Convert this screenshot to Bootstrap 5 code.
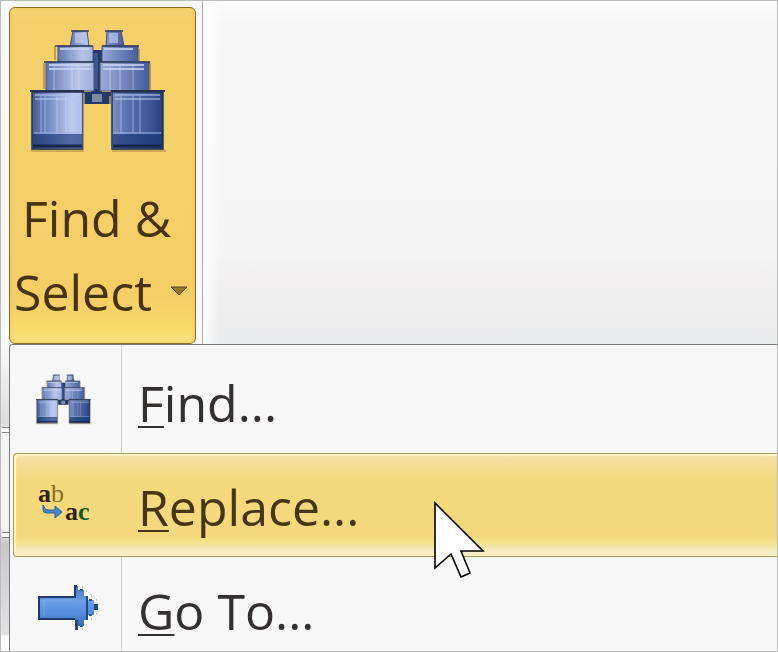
<!DOCTYPE html>
<html lang="en">
<head>
<meta charset="utf-8">
<meta name="viewport" content="width=device-width, initial-scale=1">
<title>Find &amp; Select</title>
<link href="https://cdn.jsdelivr.net/npm/bootstrap@5.3.0/dist/css/bootstrap.min.css" rel="stylesheet">
<style>
body { font-family: "Open Sans", "Noto Sans", sans-serif; color: #33302f; background: #f8f8f8; }
.window-frame { border: 1px solid #bcbcbc; }
.ribbon { padding: 6px 0 0 8px; background: #fbfbfb; }
.find-button {
  width: 187px; height: 337px; padding: 18px 0 0;
  border: 1px solid #8a6d25; border-radius: 6px;
  background: linear-gradient(#f6d473 0, #f5d06a 12px, #f5ce66 290px, #f9dc6c 322px, #f8e184 100%);
  box-shadow: inset 0 0 4px #f3c855;
  color: #4a3210; font-size: 50px; line-height: 74px;
}
.find-button .button-icon { width: 142px; height: 128px; margin-left: 18px; }
.find-label { margin-top: 27px; }
.find-label .first-line { padding-left: 12px; }
.find-label .second-line { padding-left: 4px; gap: 17px; }
.drop-arrow { width: 20px; height: 12px; }
.ribbon-group {
  margin: -6px 0 0 6px; border-left: 1px solid #b2acad;
  background: linear-gradient(90deg, #fff 0, #fff0 18px),
              linear-gradient(#fcfcfc 0, #f7f7f7 24px, #f5f5f5 255px, #f2f0f0 275px, #ececed 320px, #e9eaec 100%);
}
.sheet-edge {
  width: 8px; padding-left: 1px;
  background: linear-gradient(#fafafa 0, #dcdcde 80px, #f4f4f4 92px, #f4f4f4 184px, #c9c9cd 200px, #e2e2e5 290px, #fff 292px);
}
.edge-tick { height: 6px; border: solid #858585; border-width: 1px 0; background: #fff; }
.edge-tick-first { margin-top: 83px; }
.edge-tick-next { margin-top: 99px; }
.find-menu {
  border: solid #77787b; border-width: 1px 0 0 1px; border-radius: 4px 0 0 0;
  padding: 4px 0 0 3px;
  background: linear-gradient(90deg, #0000 111px, #cfcfcf 111px, #cfcfcf 112px, #0000 112px) #f8f8f8;
}
.menu-command {
  height: 104px; border: 1px solid #0000; border-radius: 4px 0 0 4px; padding: 0;
  color: #33302f; font-size: 50px; line-height: 98px;
}
.menu-command:hover, .menu-command:focus { background: none; color: #33302f; }
.menu-command.current, .menu-command.current:hover {
  border: solid #a59c60; border-width: 1px 0 1px 1px; color: #493515;
  background: linear-gradient(#f5e2ab 0, #f4dd91 14px, #f3da7c 28px, #f4d97e 82px, #f5e28c 88px, #f5ebbc 96px, #f9f2c8 100%);
  box-shadow: inset 2px 2px 1px #fff7cd, 0 0 2px #fffbb8;
}
.command-icon { width: 124px; padding: 0 0 4px 21px; }
.command-icon svg { display: block; }
.command-label { padding-top: 4px; }
.access-key { text-decoration: underline; text-decoration-thickness: 2px; text-underline-offset: 4px; text-decoration-skip-ink: none; }
.pointer { left: 419px; top: 46px; pointer-events: none; z-index: 2; }
</style>
<script src="https://cdn.jsdelivr.net/npm/bootstrap@5.3.0/dist/js/bootstrap.bundle.min.js"></script>
</head>
<body>
<svg width="0" height="0" class="position-absolute" aria-hidden="true">
  <defs>
    <linearGradient id="barrel">
      <stop offset="0" stop-color="#445a93"/><stop offset=".14" stop-color="#7b90c8"/>
      <stop offset=".3" stop-color="#bdcbf0"/><stop offset=".42" stop-color="#a5b8e6"/>
      <stop offset=".58" stop-color="#8496cb"/><stop offset=".75" stop-color="#546cab"/>
      <stop offset=".9" stop-color="#3f5796"/><stop offset="1" stop-color="#263f7d"/>
    </linearGradient>
    <linearGradient id="tier">
      <stop offset="0" stop-color="#6478b0"/><stop offset=".3" stop-color="#b6c4ea"/>
      <stop offset=".65" stop-color="#8799cc"/><stop offset="1" stop-color="#465d9b"/>
    </linearGradient>
    <linearGradient id="arrow-fill" x2="0" y2="1">
      <stop offset="0" stop-color="#4573be"/><stop offset=".35" stop-color="#6b9fe6"/>
      <stop offset=".65" stop-color="#538bd9"/><stop offset="1" stop-color="#2c5cab"/>
    </linearGradient>
    <symbol id="binoculars" viewBox="28 26 142 128">
      <path d="M31 149h53v3H31zM112 149h54v3h-54z" fill="#a3853d" opacity=".5"/>
      <path d="M91 50h11v42h9v12H83V92h8z" fill="#243866"/>
      <path d="M92 94h10v8H92z" fill="#7b88a8"/>
      <path d="M94 53h4v36h-4z" fill="#3f548c"/>
      <g fill="url(#tier)" stroke="#4a5572">
        <path d="M73 31h14l2 15H70zM107 31h14l3 15h-18z"/>
        <path d="M58 46h35v16H58zM102 46h36v16h-36z"/>
        <path d="M46 62h48v29H46zM100 62h49v29h-49z"/>
      </g>
      <path d="M75 33h9v10h-9zM109 33h9v10h-9z" fill="#c2ceee" opacity=".65"/>
      <path d="M60 49h29M104 49h29M49 65h42M103 65h41M49 69h42M103 69h41" stroke="#cbd6f3" stroke-width="2" opacity=".8"/>
      <path d="M71 31h18M105 31h18M55 46h38M102 46h37M44 62h50M100 62h50" stroke="#323f60" stroke-width="1.5"/>
      <path d="M55 46v14M139 49v12M44 63v26M150 63v27" stroke="#7e714d"/>
      <g fill="url(#barrel)" stroke="#263352" stroke-width="1.5">
        <path d="M32 92h51v57H32zM112 92h51v57h-51z"/>
      </g>
      <path d="M30 91h54M111 91h54" stroke="#27324f" stroke-width="2"/>
      <path d="M35 95h45M115 95h45M35 99h45M115 99h45" stroke="#b8c8ed" stroke-width="1.5" opacity=".75"/>
      <path d="M41 96v37M45 96v37M57 96v37M66 96v37M121 96v37M133 96v37M140 96v37" stroke="#d2dcf8" opacity=".55"/>
      <path d="M54 66v24M72 66v24M79 66v24M110 66v24M120 66v24M133 66v24" stroke="#dae3fa" opacity=".5"/>
      <path d="M33 134h49v14H33zM113 134h49v14h-49z" fill="#173675" opacity=".65"/>
      <path d="M34 133h48M113 133h48" stroke="#a1b8e8"/>
      <path d="M33 146h49M113 146h49" stroke="#16264c" stroke-width="3"/>
      <path d="M30 92v58M84 93v57M110 96v54M165 92v58" stroke="#e8d599"/>
    </symbol>
  </defs>
</svg>

<main class="window-frame vh-100 d-flex flex-column overflow-hidden">
  <header class="ribbon d-flex">
    <button type="button" class="find-button d-flex flex-column text-start flex-shrink-0" aria-haspopup="menu" aria-expanded="true" aria-controls="find-menu">
      <svg class="button-icon flex-shrink-0" aria-hidden="true"><use href="#binoculars"/></svg>
      <span class="find-label d-block">
        <span class="first-line d-block">Find &amp;</span>
        <span class="second-line d-flex align-items-center">Select
          <svg class="drop-arrow" viewBox="0 0 20 12" aria-hidden="true"><path d="M2 1h16l-8 8z" fill="#9a7829" stroke="#5e4312"/></svg>
        </span>
      </span>
    </button>
    <div class="ribbon-group flex-grow-1"></div>
  </header>

  <div class="d-flex flex-grow-1">
    <div class="sheet-edge flex-shrink-0" aria-hidden="true">
      <div class="edge-tick edge-tick-first"></div>
      <div class="edge-tick edge-tick-next"></div>
    </div>
    <div class="find-menu flex-grow-1" id="find-menu" role="menu">
      <button type="button" role="menuitem" class="menu-command dropdown-item d-flex align-items-center">
        <span class="command-icon flex-shrink-0"><svg width="58" height="52" aria-hidden="true"><use href="#binoculars"/></svg></span>
        <span class="command-label"><span class="access-key">F</span>ind...</span>
      </button>
      <button type="button" role="menuitem" class="menu-command current dropdown-item d-flex align-items-center position-relative overflow-visible">
        <span class="command-icon flex-shrink-0">
          <svg width="60" height="60" viewBox="35 473 60 60" aria-hidden="true">
            <g font-family="Liberation Serif, serif" font-size="26">
              <text x="38" y="502" font-weight="700" fill="#33200d">a</text>
              <text x="51" y="502" fill="#8b6f21">b</text>
              <text x="65" y="520" font-weight="700" fill="#33200d">a</text>
              <text x="78" y="520" font-weight="700" fill="#1d5526">c</text>
            </g>
            <path d="M43 505v5q0 3 4 3h8v5l7-6-7-6v4h-7q-3 0-5-5z" fill="#4d86cc" stroke="#345f9d"/>
          </svg>
        </span>
        <span class="command-label"><span class="access-key">R</span>eplace...</span>
        <svg class="pointer position-absolute" width="54" height="80" viewBox="433 500 54 80" aria-hidden="true">
          <path d="M435 503v65l16-14 10 23 9-4-9-22h22z" fill="#fff" stroke="#000" stroke-width="1.6"/>
        </svg>
      </button>
      <button type="button" role="menuitem" class="menu-command dropdown-item d-flex align-items-center">
        <span class="command-icon flex-shrink-0">
          <svg width="64" height="48" viewBox="35 583 64 48" aria-hidden="true">
            <path d="M39 597h36v-11h3v4h6v6h4v4h6v5h3v5h-3v5h-6v5h-4v6h-6v4h-3v-11H39z" fill="url(#arrow-fill)"/>
            <path d="M75 619H39v-22h36v-11h2" fill="none" stroke="#203b70" stroke-width="2"/>
            <path d="M44 600v16M42 600h32" stroke="#82aeee" opacity=".8"/>
            <path d="M75 620h3v10h-3zM86 596h2v24h-2zM94 604h4v6h-4z" fill="#26477f"/>
            <path d="M80 590h3M80 626h3M89 600h3M89 615h3" stroke="#2f5799" stroke-width="2"/>
            <path d="M82 587h1M86 591h1M91 596h1M96 600h1M96 614h1M91 619h1M86 625h1M82 629h1" stroke="#7e9cc9"/>
          </svg>
        </span>
        <span class="command-label"><span class="access-key">G</span>o To...</span>
      </button>
    </div>
  </div>
</main>
</body>
</html>
